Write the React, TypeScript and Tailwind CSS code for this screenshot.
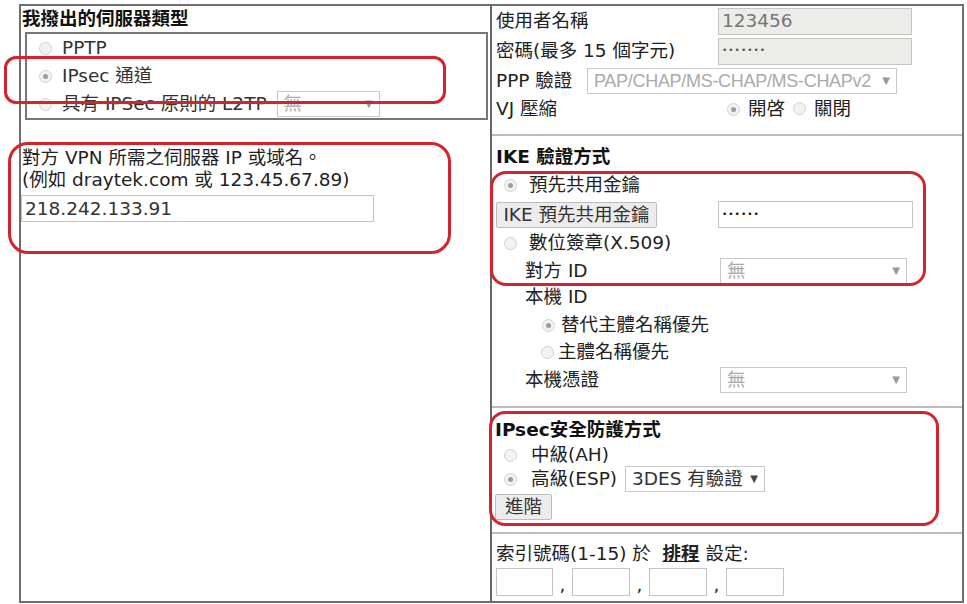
import type { ReactNode } from "react";

const FONT = "font-['DejaVu_Sans','Noto_Sans_CJK_TC',sans-serif]";

function Radio({ checked }: { checked?: boolean }) {
  return (
    <span className="inline-flex h-[13px] w-[13px] shrink-0 items-center justify-center rounded-full border border-[#d2d2d2] bg-[#f2f2f2]">
      {checked && <span className="h-[5px] w-[5px] rounded-full bg-[#9c9c9c]" />}
    </span>
  );
}

function Select({ value, width, dark, className = "" }: { value: string; width: string; dark?: boolean; className?: string }) {
  return (
    <div
      className={`flex h-[26px] items-center justify-between border border-[#c9c9c9] bg-white px-[6px] ${width} ${
        dark ? "text-[#333]" : "text-[#aaa]"
      }`}
    >
      <span className={`whitespace-nowrap ${className}`}>{value}</span>
      <span className={`text-[10px] ${dark ? "text-[#444]" : "text-[#999]"}`}>▼</span>
    </div>
  );
}

function Field({ value, width, grey, className = "" }: { value?: string; width: string; grey?: boolean; className?: string }) {
  return (
    <div
      className={`flex h-[27px] items-center border border-[#c4c4c4] px-[3px] ${width} ${
        grey ? "bg-[#ecece9] text-[#777]" : "bg-white text-[#333]"
      } ${className}`}
    >
      {value}
    </div>
  );
}

function Button({ children, width }: { children: ReactNode; width: string }) {
  return (
    <div
      className={`flex h-[26px] items-center justify-center rounded-[2px] border border-[#bdbdbd] bg-[#ececec] text-[#333] ${width}`}
    >
      {children}
    </div>
  );
}

function Annotation({ className }: { className: string }) {
  return <div className={`pointer-events-none absolute border-[3px] border-[#d3242c] ${className}`} />;
}

function LeftColumn() {
  return (
    <div className="flex w-[469px] shrink-0 flex-col">
      <div className="flex h-[26px] items-center pl-[1px] font-bold text-[#111]">我撥出的伺服器類型</div>
      <div className="ml-[4px] mr-[2px] border-2 border-[#777] text-[#333]">
        <div className="flex h-[28px] items-center gap-[10px] pl-[12px]">
          <Radio />
          <span>PPTP</span>
        </div>
        <div className="flex h-[28px] items-center gap-[10px] pl-[12px]">
          <Radio checked />
          <span>IPsec 通道</span>
        </div>
        <div className="flex h-[28px] items-center gap-[10px] pl-[12px]">
          <Radio />
          <span>具有 IPSec 原則的 L2TP</span>
          <Select value="無" width="w-[103px]" />
        </div>
      </div>
      <div className="mt-[27px] pl-[1px] leading-[22px] text-[#222]">
        <div>對方 VPN 所需之伺服器 IP 或域名。</div>
        <div>(例如 draytek.com 或 123.45.67.89)</div>
      </div>
      <Field value="218.242.133.91" width="w-[353px]" className="mt-[4px]" />
    </div>
  );
}

function RightColumn() {
  return (
    <div className="flex flex-1 flex-col border-l-2 border-[#666] pl-[4px] text-[#222]">
      {/* account */}
      <div className="-ml-[4px] flex flex-col border-b-2 border-[#bbb] pb-[12px] pl-[4px]">
        <div className="flex h-[30px] items-center">
          <span className="w-[222px]">使用者名稱</span>
          <Field value="123456" width="w-[194px]" grey />
        </div>
        <div className="flex h-[30px] items-center">
          <span className="w-[222px]">密碼(最多 15 個字元)</span>
          <Field value="•••••••" width="w-[194px]" grey className="text-[9px] tracking-[1px] !text-[#555]" />
        </div>
        <div className="flex h-[30px] items-center">
          <span className="w-[91px]">PPP 驗證</span>
          <Select
            value="PAP/CHAP/MS-CHAP/MS-CHAPv2"
            width="w-[310px]"
            className="font-['Liberation_Sans',sans-serif] text-[18px] tracking-[-0.3px]"
          />
        </div>
        <div className="flex h-[26px] items-center">
          <span className="w-[231px]">VJ 壓縮</span>
          <Radio checked />
          <span className="ml-[8px]">開啓</span>
          <span className="ml-[8px]">
            <Radio />
          </span>
          <span className="ml-[8px]">關閉</span>
        </div>
      </div>

      {/* IKE */}
      <div className="-ml-[4px] flex flex-col border-b-2 border-[#bbb] pb-[13px] pl-[4px]">
        <div className="mt-[10px] flex h-[22px] items-center font-bold text-[#111]">IKE 驗證方式</div>
        <div className="mt-[6px] flex h-[22px] items-center gap-[12px] pl-[8px]">
          <Radio checked />
          <span>預先共用金鑰</span>
        </div>
        <div className="mt-[5px] flex h-[27px] items-center">
          <Button width="w-[161px]">IKE 預先共用金鑰</Button>
          <Field value="••••••" width="ml-[61px] w-[195px]" className="text-[9px] tracking-[1px] !text-[#111]" />
        </div>
        <div className="mt-[4px] flex h-[22px] items-center gap-[12px] pl-[8px]">
          <Radio />
          <span>數位簽章(X.509)</span>
        </div>
        <div className="mt-[4px] flex h-[26px] items-center">
          <span className="w-[224px] pl-[29px]">對方 ID</span>
          <Select value="無" width="w-[187px]" />
        </div>
        <div className="mt-[2px] flex h-[22px] items-center pl-[29px]">本機 ID</div>
        <div className="mt-[6px] flex h-[22px] items-center gap-[6px] pl-[46px]">
          <Radio checked />
          <span>替代主體名稱優先</span>
        </div>
        <div className="mt-[5px] flex h-[22px] items-center gap-[4px] pl-[45px]">
          <Radio />
          <span>主體名稱優先</span>
        </div>
        <div className="mt-[4px] flex h-[26px] items-center">
          <span className="w-[224px] pl-[29px]">本機憑證</span>
          <Select value="無" width="w-[187px]" />
        </div>
      </div>

      {/* IPsec */}
      <div className="-ml-[4px] flex flex-col border-b-2 border-[#bbb] pb-[12px] pl-[3px]">
        <div className="mt-[11px] flex h-[22px] items-center font-bold text-[#111]">IPsec安全防護方式</div>
        <div className="mt-[3px] flex h-[22px] items-center gap-[14px] pl-[9px]">
          <Radio />
          <span>中級(AH)</span>
        </div>
        <div className="flex h-[26px] items-center pl-[9px]">
          <Radio checked />
          <span className="ml-[14px] mr-[8px]">高級(ESP)</span>
          <Select value="3DES 有驗證" width="w-[140px]" dark />
        </div>
        <div className="mt-[2px] flex">
          <Button width="w-[57px]">進階</Button>
        </div>
      </div>

      {/* schedule */}
      <div className="flex flex-col">
        <div className="mt-[9px] flex h-[22px] items-center">
          索引號碼(1-15) 於&nbsp;&nbsp;<span className="font-bold underline">排程</span>&nbsp;設定:
        </div>
        <div className="mt-[3px] flex h-[28px] items-end">
          <div className="h-[28px] w-[57px] border border-[#c4c4c4] bg-white" />
          <span className="w-[19px] text-center">,</span>
          <div className="h-[28px] w-[58px] border border-[#c4c4c4] bg-white" />
          <span className="w-[19px] text-center">,</span>
          <div className="h-[28px] w-[58px] border border-[#c4c4c4] bg-white" />
          <span className="w-[19px] text-center">,</span>
          <div className="h-[28px] w-[58px] border border-[#c4c4c4] bg-white" />
        </div>
      </div>
    </div>
  );
}

export default function App() {
  return (
    <div className={`relative h-[604px] w-[967px] overflow-hidden bg-white pt-[4px] text-[18.5px] leading-tight ${FONT}`}>
      <div className="ml-[19px] flex h-[599px] w-[945px] border-2 border-[#6e6e6e]">
        <LeftColumn />
        <RightColumn />
      </div>

      <Annotation className="left-[4px] top-[56px] h-[48px] w-[442px] rounded-[12px]" />
      <Annotation className="left-[8px] top-[142px] h-[112px] w-[443px] rounded-[20px]" />
      <Annotation className="left-[490px] top-[171px] h-[115px] w-[436px] rounded-[16px]" />
      <Annotation className="left-[489px] top-[411px] h-[115px] w-[450px] rounded-[16px]" />
    </div>
  );
}
